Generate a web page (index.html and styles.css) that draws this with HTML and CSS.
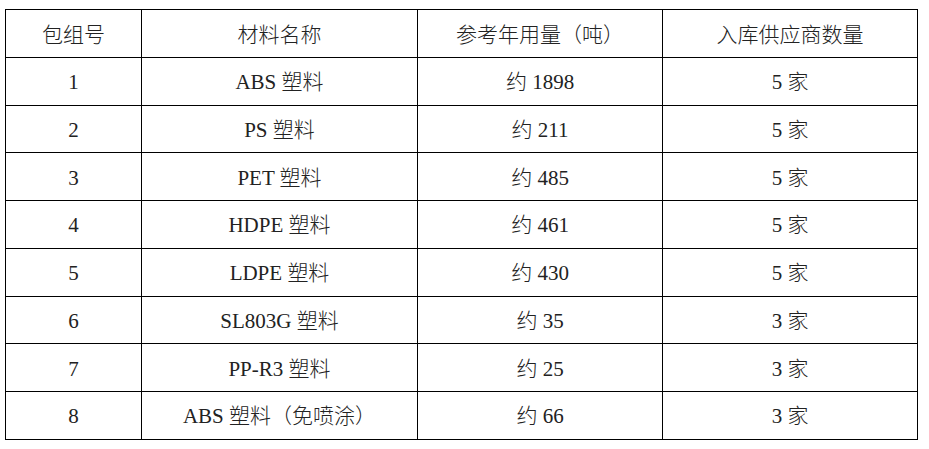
FILE: index.html
```html
<!DOCTYPE html>
<html lang="zh-CN">
<head>
<meta charset="utf-8">
<title>包组</title>
<link rel="stylesheet" href="styles.css">
</head>
<body>
<table class="grid">
  <colgroup>
    <col class="c1"><col class="c2"><col class="c3"><col class="c4">
  </colgroup>
  <tr><td>包组号</td><td>材料名称</td><td>参考年用量（吨）</td><td>入库供应商数量</td></tr>
  <tr><td><span class="lat">1</span></td><td><span class="lat">ABS </span>塑料</td><td>约<span class="lat"> 1898</span></td><td><span class="lat">5 </span>家</td></tr>
  <tr><td><span class="lat">2</span></td><td><span class="lat">PS </span>塑料</td><td>约<span class="lat"> 211</span></td><td><span class="lat">5 </span>家</td></tr>
  <tr><td><span class="lat">3</span></td><td><span class="lat">PET </span>塑料</td><td>约<span class="lat"> 485</span></td><td><span class="lat">5 </span>家</td></tr>
  <tr><td><span class="lat">4</span></td><td><span class="lat">HDPE </span>塑料</td><td>约<span class="lat"> 461</span></td><td><span class="lat">5 </span>家</td></tr>
  <tr><td><span class="lat">5</span></td><td><span class="lat">LDPE </span>塑料</td><td>约<span class="lat"> 430</span></td><td><span class="lat">5 </span>家</td></tr>
  <tr><td><span class="lat">6</span></td><td><span class="lat">SL803G </span>塑料</td><td>约<span class="lat"> 35</span></td><td><span class="lat">3 </span>家</td></tr>
  <tr><td><span class="lat">7</span></td><td><span class="lat">PP-R3 </span>塑料</td><td>约<span class="lat"> 25</span></td><td><span class="lat">3 </span>家</td></tr>
  <tr><td><span class="lat">8</span></td><td><span class="lat">ABS </span>塑料（免喷涂）</td><td>约<span class="lat"> 66</span></td><td><span class="lat">3 </span>家</td></tr>
</table>
</body>
</html>
```
FILE: styles.css
```css
html, body {
  margin: 0;
  background: #fff;
}
body {
  padding: 9px 0 0 5px;
  font-family: "Noto Sans CJK SC", "Noto Sans", sans-serif;
  color: #222;
}
.grid {
  border-collapse: collapse;
  table-layout: fixed;
  width: 912px;
}
.c1 { width: 136px; }
.c2 { width: 276px; }
.c3 { width: 245px; }
.c4 { width: 255px; }
.grid tr { height: 47.75px; }
.grid td {
  border: 1px solid #000;
  padding: 0;
  text-align: center;
  vertical-align: middle;
  font-size: 21px;
  font-weight: 300;
  line-height: 24px;
}
.lat {
  font-family: "Liberation Serif", serif;
  font-size: 21px;
  font-weight: 400;
}
```
